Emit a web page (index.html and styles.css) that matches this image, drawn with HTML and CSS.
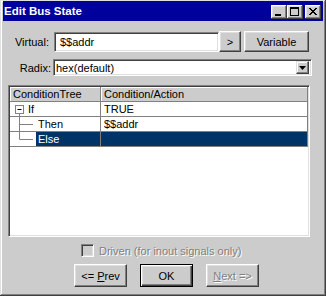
FILE: index.html
```html
<!DOCTYPE html>
<html>
<head>
<meta charset="utf-8">
<link rel="stylesheet" href="styles.css">
</head>
<body>
<div class="window">
  <div class="titlebar">
    <span class="title">Edit Bus State</span>
    <div class="tbtns">
      <div class="tbtn"><svg width="16" height="14" viewBox="0 0 16 14"><rect x="4" y="9" width="6" height="2" fill="#000"/></svg></div>
      <div class="tbtn"><svg width="16" height="14" viewBox="0 0 16 14"><rect x="3.5" y="2.5" width="8" height="8" fill="none" stroke="#000"/><rect x="3" y="2" width="9" height="2" fill="#000"/></svg></div>
      <div class="tbtn close"><svg width="16" height="14" viewBox="0 0 16 14"><path d="M4 3 L11 10 M5 3 L12 10 M11 3 L4 10 M12 3 L5 10" stroke="#000" stroke-width="1" fill="none"/></svg></div>
    </div>
  </div>
  <div class="content">
    <div class="row row-virtual">
      <span class="label label-virtual">Virtual:</span>
      <div class="field field-virtual">$$addr</div>
      <div class="btn btn-arrow">&gt;</div>
      <div class="btn btn-variable">Variable</div>
    </div>
    <div class="row row-radix">
      <span class="label label-radix">Radix:</span>
      <div class="field field-radix">
        <span class="combo-text">hex(default)</span>
        <div class="combo-btn"><svg width="7" height="4" viewBox="0 0 7 4"><path d="M0 0 H7 L3.5 4 Z" fill="#000"/></svg></div>
      </div>
    </div>
    <div class="table">
      <div class="trow thead">
        <div class="c1 th">ConditionTree</div>
        <div class="c2 th">Condition/Action</div>
      </div>
      <div class="trow">
        <div class="c1 tree">
          <svg class="tree-svg" width="16" height="14" viewBox="0 0 16 14"><rect x="5.5" y="3.5" width="8" height="8" fill="#fff" stroke="#808080"/><path d="M7.5 7.5 H11.5" stroke="#000"/><path d="M9.5 11.5 V14" stroke="#808080"/></svg>
          <span class="node node-if">If</span>
        </div>
        <div class="c2">TRUE</div>
      </div>
      <div class="trow">
        <div class="c1 tree">
          <svg class="tree-svg" width="26" height="14" viewBox="0 0 26 14"><path d="M9.5 -1 V15 M9.5 7.5 H23" stroke="#808080"/></svg>
          <span class="node">Then</span>
        </div>
        <div class="c2">$$addr</div>
      </div>
      <div class="trow selected">
        <div class="c1 tree">
          <svg class="tree-svg" width="26" height="15" viewBox="0 0 26 15"><path d="M9.5 -1 V7.5 H23" stroke="#808080" fill="none"/></svg>
          <span class="node sel">Else</span>
        </div>
        <div class="c2 sel-cell"></div>
      </div>
    </div>
    <div class="check-row">
      <div class="checkbox"></div>
      <span class="disabled">Driven (for inout signals only)</span>
    </div>
    <div class="buttons">
      <div class="btn dbtn"><span>&lt;= <u>P</u>rev</span></div>
      <div class="btn dbtn default"><span>OK</span></div>
      <div class="btn dbtn"><span class="disabled"><u>N</u>ext =&gt;</span></div>
    </div>
  </div>
</div>
</body>
</html>
```

FILE: styles.css
```css
html, body {
  margin: 0;
  padding: 0;
  background: #cccccc;
}

body {
  font-family: "Liberation Sans", Arial, sans-serif;
  font-size: 11px;
  color: #000;
}

.window {
  width: 326px;
  height: 296px;
  box-sizing: border-box;
  padding: 1px 3px 3px 3px;
  background: #cccccc;
  box-shadow: inset -1px -1px #404040, inset 1px 1px #dfdfdf, inset -2px -2px #808080, inset 2px 2px #ffffff;
  display: flex;
  flex-direction: column;
}

.titlebar {
  height: 20px;
  background: #00009c;
  display: flex;
  align-items: center;
  justify-content: space-between;
  padding: 0 2px 0 1px;
}

.title {
  color: #fff;
  font-weight: bold;
  font-size: 11.5px;
}

.tbtns {
  display: flex;
  padding-top: 1px;
}

.tbtn {
  width: 16px;
  height: 14px;
  background: #cccccc;
  box-shadow: inset -1px -1px #404040, inset 1px 1px #ffffff, inset -2px -2px #808080, inset 2px 2px #dfdfdf;
}

.tbtn svg {
  display: block;
}

.tbtn.close {
  margin-left: 2px;
}

.content {
  padding: 10px 0 0 5px;
  display: flex;
  flex-direction: column;
}

.row {
  display: flex;
  align-items: center;
}

.label {
  text-align: right;
}

.label-virtual {
  width: 41px;
  margin-right: 5px;
}

.label-radix {
  width: 43px;
  margin-right: 2px;
}

.field {
  box-sizing: border-box;
  background: #fff;
  border: 1px solid;
  border-color: #808080 #ffffff #ffffff #808080;
  box-shadow: inset 1px 1px #404040, inset -1px -1px #dfdfdf;
  display: flex;
  align-items: center;
}

.field-virtual {
  width: 165px;
  height: 20px;
  padding-left: 5px;
}

.btn {
  box-sizing: border-box;
  background: #cccccc;
  border: 1px solid;
  border-color: #ffffff #404040 #404040 #ffffff;
  box-shadow: inset -1px -1px #808080, inset 1px 1px #dfdfdf;
  display: flex;
  align-items: center;
  justify-content: center;
}

.btn-arrow {
  width: 22px;
  height: 21px;
}

.btn-variable {
  width: 65px;
  height: 21px;
  margin-left: 3px;
}

.row-radix {
  margin-top: 7px;
}

.field-radix {
  width: 259px;
  height: 17px;
  padding-left: 2px;
  padding-right: 2px;
  justify-content: space-between;
}

.combo-btn {
  width: 13px;
  height: 13px;
  box-sizing: border-box;
  background: #cccccc;
  border: 1px solid;
  border-color: #dfdfdf #404040 #404040 #dfdfdf;
  box-shadow: inset -1px -1px #808080, inset 1px 1px #ffffff;
  display: flex;
  align-items: center;
  justify-content: center;
}

.combo-btn svg {
  display: block;
}

.table {
  margin-top: 9px;
  width: 302px;
  height: 152px;
  box-sizing: border-box;
  background: #fff;
  border: 1px solid;
  border-color: #808080 #ffffff #ffffff #808080;
  box-shadow: inset 1px 1px #404040, inset -1px -1px #dfdfdf;
  padding: 1px;
  display: flex;
  flex-direction: column;
}

.trow {
  display: flex;
  height: 15px;
  box-sizing: border-box;
  border-bottom: 1px solid #808080;
}

.c1 {
  width: 91px;
  box-sizing: border-box;
  border-right: 1px solid #808080;
  display: flex;
  align-items: center;
}

.c2 {
  flex: 1;
  box-sizing: border-box;
  border-right: 1px solid #808080;
  display: flex;
  align-items: center;
  padding-left: 3px;
}

.th {
  background: #cccccc;
  box-shadow: inset 1px 1px #ffffff;
  padding-left: 3px;
}

.tree {
  align-items: stretch;
}

.tree-svg {
  display: block;
  flex: none;
}

.node {
  padding: 0 2px;
  display: flex;
  align-items: center;
}

.selected {
  border-top: 1px solid #808080;
  margin-top: -1px;
  height: 16px;
}

.sel {
  background: #003366;
  color: #fff;
  flex: 1;
}

.sel-cell {
  background: #003366;
}

.check-row {
  margin-top: 7px;
  display: flex;
  align-items: center;
  padding-left: 73px;
  height: 13px;
}

.checkbox {
  width: 13px;
  height: 13px;
  box-sizing: border-box;
  background: #cccccc;
  border: 1px solid;
  border-color: #808080 #ffffff #ffffff #808080;
  box-shadow: inset 1px 1px #404040, inset -1px -1px #dfdfdf;
  margin-right: 5px;
}

.disabled {
  color: #808080;
  text-shadow: 1px 1px #ffffff;
}

.buttons {
  margin-top: 7px;
  display: flex;
  gap: 13px;
  padding-left: 66px;
}

.dbtn {
  width: 53px;
  height: 23px;
}

.dbtn.default {
  border: 1px solid #000;
  box-shadow: inset 1px 1px #ffffff, inset -1px -1px #404040, inset -2px -2px #808080, inset 2px 2px #dfdfdf;
}
```
